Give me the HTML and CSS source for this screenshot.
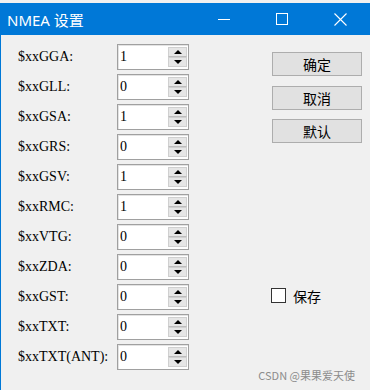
FILE: index.html
```html
<!DOCTYPE html>
<html lang="zh-CN">
<head>
  <meta charset="UTF-8" />
  <title>NMEA 设置</title>
  <link rel="stylesheet" href="styles.css">
</head>
<body>

<div class="window">
  <div class="titlebar">
    <span class="title">NMEA 设置</span>
    <div class="controls">
      <span class="ctl"><svg width="12" height="12" viewBox="0 0 12 12"><path d="M0 6.5h12" stroke="#fff" stroke-width="1"/></svg></span>
      <span class="ctl"><svg width="12" height="12" viewBox="0 0 12 12"><rect x="0.5" y="0.5" width="11" height="11" fill="none" stroke="#fff" stroke-width="1"/></svg></span>
      <span class="ctl"><svg width="13" height="13" viewBox="0 0 13 13"><path d="M0.5 0.5L12.5 12.5M12.5 0.5L0.5 12.5" stroke="#fff" stroke-width="1.1"/></svg></span>
    </div>
  </div>

  <div class="content">
    <div class="fields" id="fields"></div>

    <div class="side">
      <button class="btn">确定</button>
      <button class="btn">取消</button>
      <button class="btn">默认</button>
      <label class="check"><span class="box"></span>保存</label>
    </div>
  </div>

  <div class="watermark">CSDN @果果爱天使</div>
</div>

<script>
  const rows = [
    ['$xxGGA', 1], ['$xxGLL', 0], ['$xxGSA', 1], ['$xxGRS', 0],
    ['$xxGSV', 1], ['$xxRMC', 1], ['$xxVTG', 0], ['$xxZDA', 0],
    ['$xxGST', 0], ['$xxTXT', 0], ['$xxTXT(ANT)', 0]
  ];

  const list = document.getElementById('fields');
  for (const [name, val] of rows) {
    const row = document.createElement('div');
    row.className = 'row';
    row.innerHTML = `
      <span class="label">${name}:</span>
      <div class="spin">
        <span class="val">${val}</span>
        <div class="arrows">
          <span class="arrow up"></span>
          <span class="arrow down"></span>
        </div>
      </div>
    `;
    list.appendChild(row);
  }
</script>

</body>
</html>
```

FILE: styles.css
```css
html, body {
  margin: 0; padding: 0;
  background: #f0f0f0;
  overflow: hidden;
}

.window {
  position: relative;
  margin-top: 3px;
  height: 387px;
  border-left: 1px solid #0078d7;
  background: #f0f0f0;
}

.titlebar {
  display: flex;
  align-items: center;
  height: 32px;
  background: #0078d7;
  color: #fff;
}

.title {
  padding-left: 6px;
  font-family: "Noto Sans", "Noto Sans CJK SC", sans-serif;
  font-size: 15px;
}

.controls {
  display: flex;
  margin-left: auto;
  padding-right: 1px;
}

.ctl {
  display: flex;
  align-items: center;
  justify-content: center;
  width: 58px;
  height: 32px;
}

.content {
  display: flex;
  padding: 9px 8px 0 17px;
}

.row {
  display: flex;
  align-items: center;
  height: 26px;
  margin-bottom: 4px;
}

.label {
  width: 99px;
  font-family: "Liberation Serif", serif;
  font-size: 14px;
  color: #000;
}

.spin {
  display: flex;
  width: 72px; height: 26px;
  box-sizing: border-box;
  border: 1px solid #a0a0a0;
  box-shadow: inset 1px 1px 0 #e3e3e3;
  background: #fff;
}

.val {
  flex: 1;
  padding: 4px 0 0 2px;
  font-family: "Liberation Serif", serif;
  font-size: 14px;
}

.arrows {
  display: flex;
  flex-direction: column;
  width: 19px;
  margin: 2px 1px 2px 0;
}

.arrow {
  position: relative;
  flex: 1;
  background: #e6e6e6;
  border: 1px solid #d0d0d0;
}

.arrow.up { border-bottom-color: #bdbdbd; }

.arrow::after {
  content: '';
  position: absolute;
  left: 50%; top: 50%;
  margin-left: -4px;
  border-left: 4px solid transparent;
  border-right: 4px solid transparent;
}

.arrow.up::after {
  margin-top: -2px;
  border-bottom: 4px solid #000;
}

.arrow.down::after {
  margin-top: -2px;
  border-top: 4px solid #000;
}

.side {
  display: flex;
  flex-direction: column;
  align-items: flex-start;
  margin-left: auto;
  padding-top: 8px;
}

.btn {
  width: 90px; height: 24px;
  margin-bottom: 9.5px;
  padding: 0;
  background: #e1e1e1;
  border: 1px solid #adadad;
  font-family: "Noto Sans CJK SC", sans-serif;
  font-size: 14px;
  line-height: 20px;
  color: #000;
}

.check {
  display: flex;
  align-items: center;
  margin: 133px 0 0 -1px;
  font-family: "Noto Sans CJK SC", sans-serif;
  font-size: 14px;
}

.box {
  width: 13px; height: 13px;
  margin-right: 7px;
  border: 1px solid #333;
  background: #fff;
}

.watermark {
  position: absolute;
  right: 15px; bottom: 7px;
  font-family: "Noto Sans CJK SC", sans-serif;
  font-size: 11px;
  color: #8c8c8c;
}
```
